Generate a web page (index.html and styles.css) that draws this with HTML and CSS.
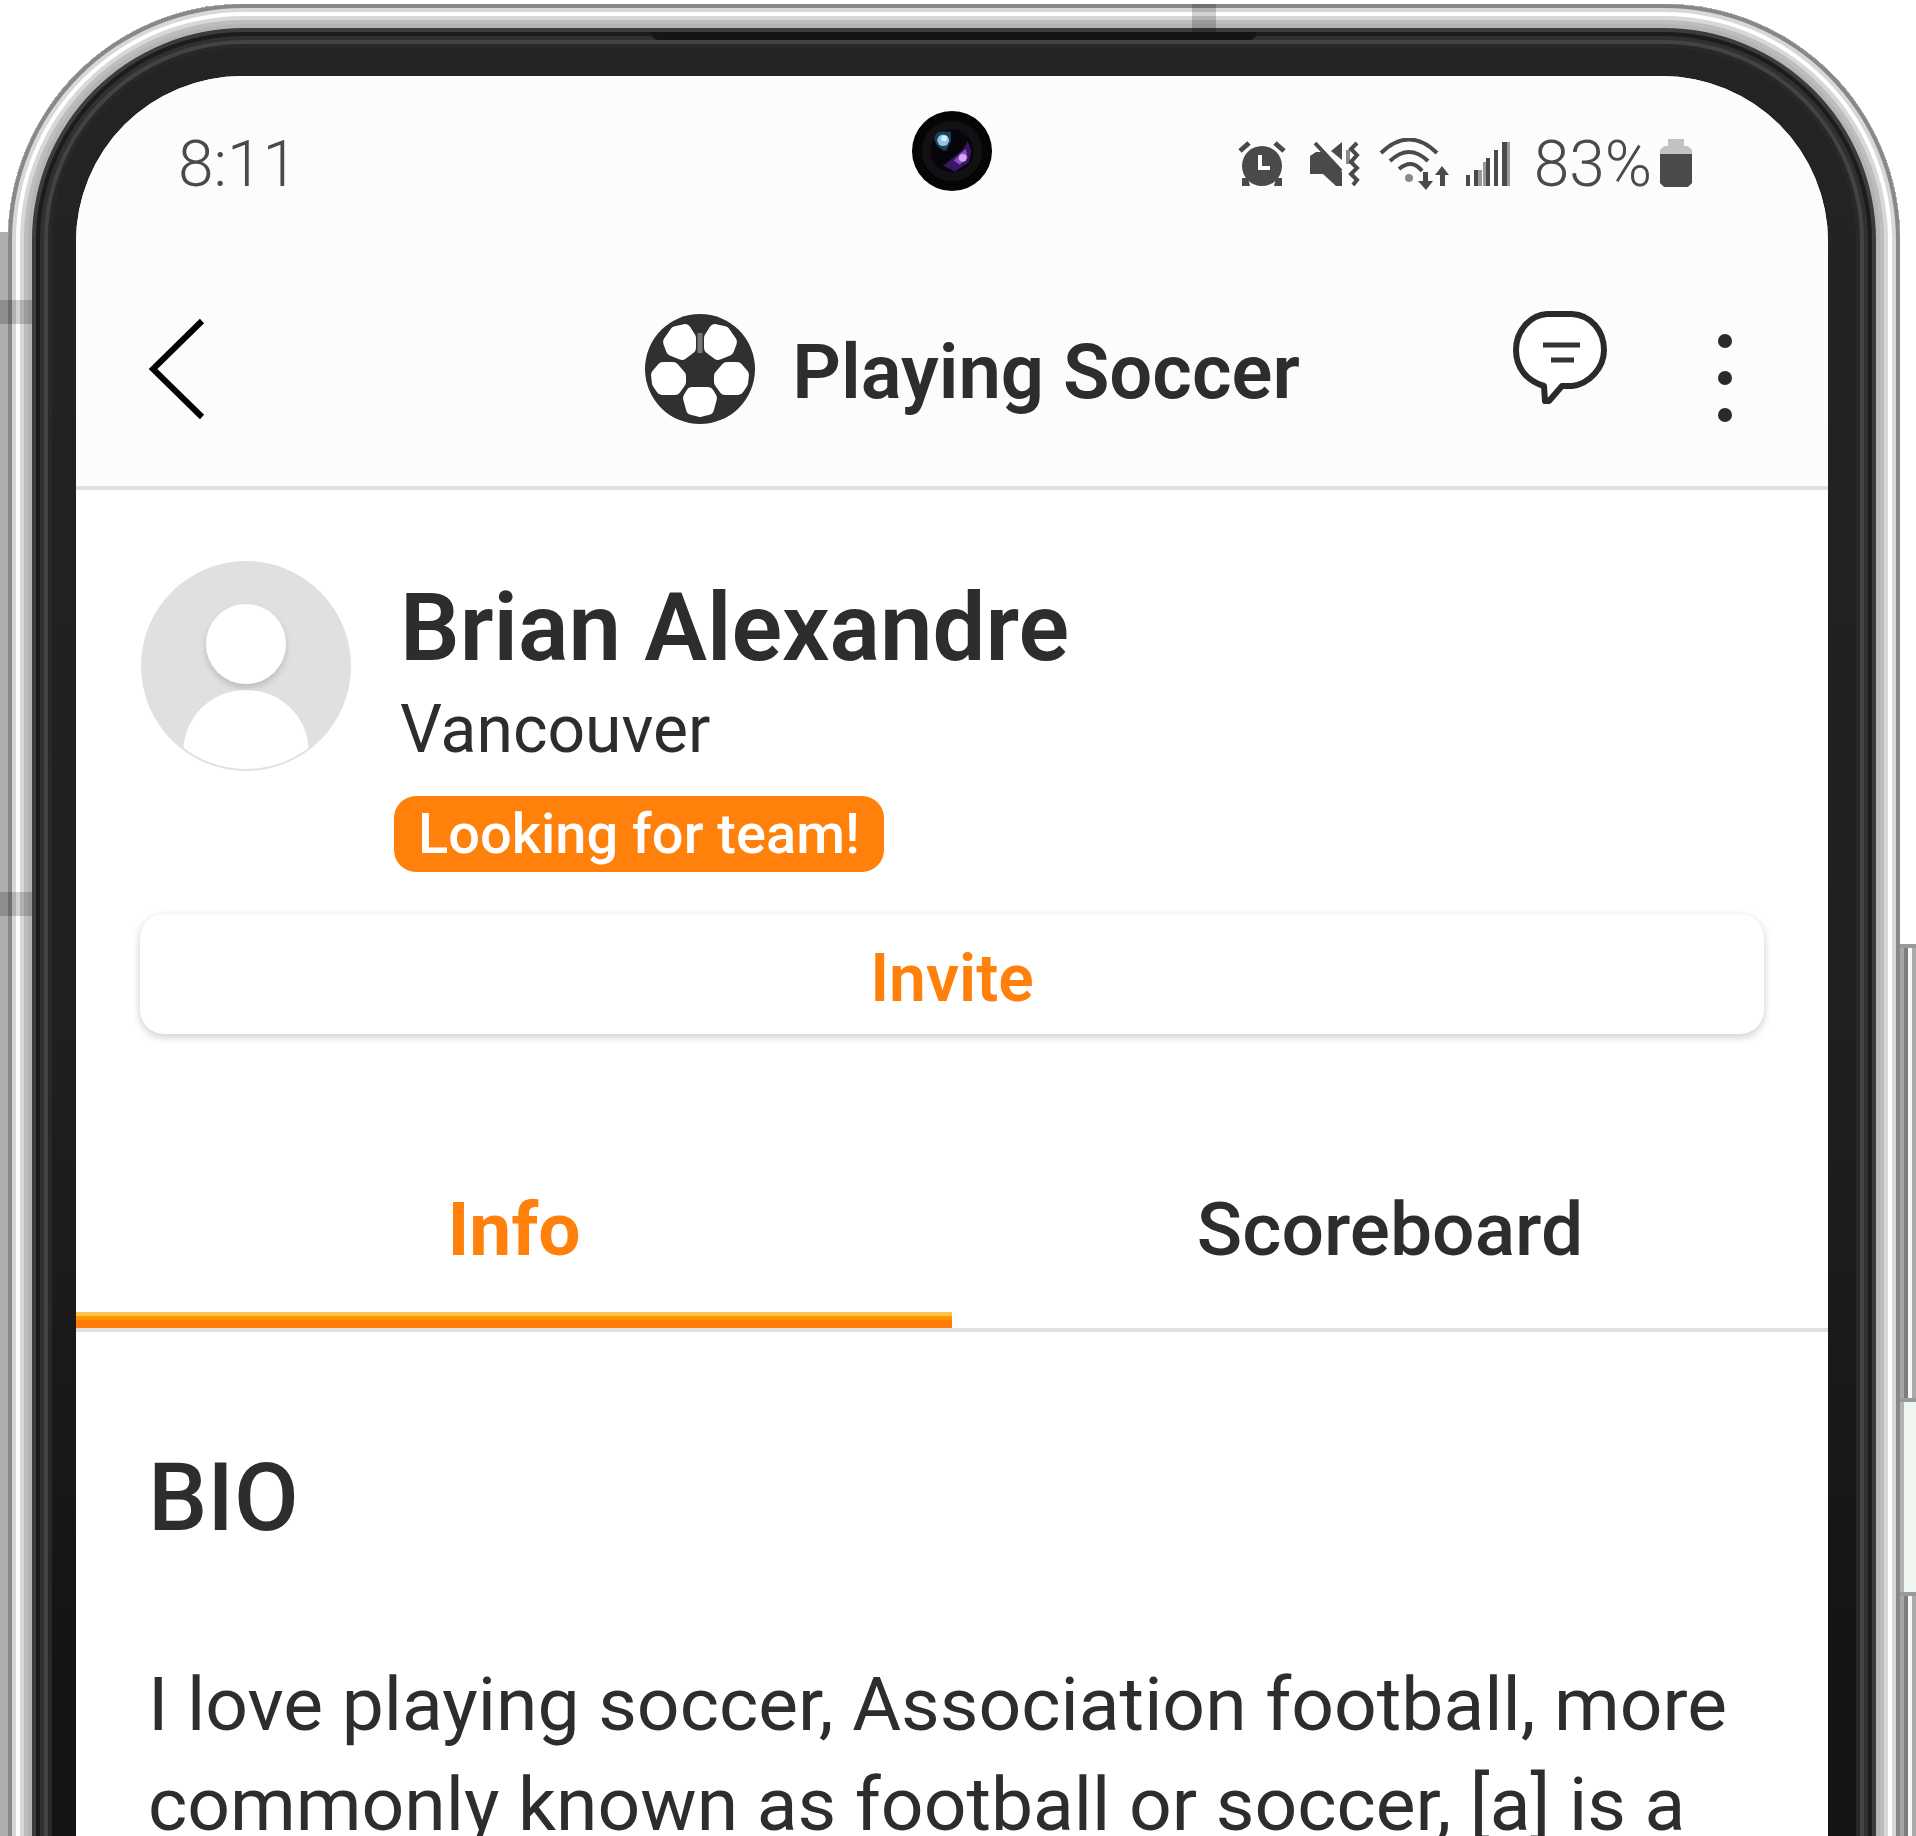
FILE: index.html
```html
<!DOCTYPE html>
<html lang="en">
<head>
<meta charset="utf-8">
<meta name="viewport" content="width=device-width, initial-scale=1">
<title>Playing Soccer</title>
<link rel="stylesheet" href="styles.css">
</head>
<body>
<div class="stage">
  <div class="side-left"></div>
  <div class="side-right"></div>
  <div class="side-key key-volume"></div>
  <div class="side-key key-power"></div>
  <div class="phone">
    <span class="antenna antenna-top"></span>
    <span class="antenna antenna-side antenna-upper"></span>
    <span class="antenna antenna-side antenna-lower"></span>
    <span class="speaker"></span>
    <div class="screen">
      <svg class="camera" viewBox="0 0 84 84" aria-hidden="true">
        <circle cx="42" cy="42" r="41" fill="#050506"/>
        <circle cx="42" cy="42" r="31" fill="#121012"/>
        <circle cx="42" cy="42" r="22" fill="#060509"/>
        <path d="M24 30q0-8 8-8h9v10l-5 10q-10-2-12-12z" fill="#173f5a"/>
        <circle cx="33" cy="31" r="6" fill="#8fc4e2"/>
        <circle cx="34" cy="29" r="3" fill="#d8f0f6"/>
        <path d="M58 32l4 10-3 12-14 9-12-6 10-8 10-8z" fill="#3a1766"/>
        <path d="M56 40l2 9-8 7-6-4 6-7z" fill="#8a4fc0"/>
        <circle cx="53" cy="49" r="4" fill="#d9a8f0"/>
      </svg>

      <div class="status">
        <span class="status-text">8:11</span>
        <div class="status-right">
          <svg width="52" height="52" viewBox="0 0 52 52" aria-hidden="true">
            <path d="M2 13L11 5M46 13L37 5" stroke="#4a4a4a" stroke-width="5" fill="none"/>
            <circle cx="24" cy="28" r="20" fill="#4a4a4a"/>
            <path d="M4 48V40H10L12 48zM44 48V40H38L36 48z" fill="#4a4a4a"/>
            <path d="M22 17v13h10" fill="none" stroke="#fff" stroke-width="4"/>
          </svg>
          <svg width="56" height="52" viewBox="0 0 56 52" aria-hidden="true">
            <path d="M4 18L10 14H18L36 34V48H30L17 36H4z" fill="#4a4a4a"/>
            <path d="M9 5l26 28" stroke="#4a4a4a" stroke-width="4"/>
            <path d="M36 4v18L25 13z" fill="#4a4a4a"/>
            <path d="M42 12v14" stroke="#8a8a8a" stroke-width="4"/>
            <path d="M51 5l-6 6 6 6-6 7 6 6-6 6 6 6-4 5" fill="none" stroke="#4a4a4a" stroke-width="4"/>
          </svg>
          <svg width="72" height="52" viewBox="0 0 72 52" aria-hidden="true">
            <g fill="none" stroke="#4a4a4a" stroke-width="4">
              <path d="M3 15Q31-12 59 15"/>
              <path d="M12 23q19-18 38 0"/>
              <path d="M21 31q13-11 23 2"/>
            </g>
            <circle cx="31" cy="40" r="4" fill="#8a8a8a"/>
            <path d="M45 34h5v9h5l-7 9-8-9h5zM62 48h5v-11h4l-7-9-7 9h5z" fill="#4a4a4a"/>
          </svg>
          <svg width="52" height="52" viewBox="0 0 52 52" aria-hidden="true">
            <path d="M0 37h4v11H0zM8 32h4v16H8zM20 20h4v28h-4zM28 12h4v36h-4zM36 4h5v44h-5z" fill="#4a4a4a"/>
            <path d="M12 32h4v16h-4zM17 24h3v24h-3zM41 4h3v44h-3z" fill="#999"/>
          </svg>
          <span class="battery">
            <span class="status-text">83%</span>
            <svg width="32" height="52" viewBox="0 0 32 52" aria-hidden="true">
              <path d="M8 1h16v7h4l4 4v4H0v-4l4-4h4z" fill="#c2c2c2"/>
              <path d="M0 16h32v29l-4 4H4l-4-4z" fill="#4a4a4a"/>
            </svg>
          </span>
        </div>
      </div>

      <header class="bar">
        <button class="icon-button back" type="button" aria-label="Back">
          <svg width="60" height="108" viewBox="0 0 60 108" aria-hidden="true"><path d="M56 6L7 54l49 48" fill="none" stroke="#000" stroke-width="6"/></svg>
        </button>
        <h1 class="title">
          <svg width="112" height="112" viewBox="-56 -56 112 112" aria-hidden="true">
            <circle r="55" fill="#303030"/>
            <g fill="#fff" stroke="#fff" stroke-width="12" stroke-linejoin="round">
              <path d="M-24-37L-15-39-10-31-10-21-18-15-28-19-31-27z"/>
              <path d="M24-37L15-39 10-31 10-21 18-15 28-19 31-27z"/>
              <path d="M-37-1L-27-1-20 7-20 13-25 20-38 20-42 14-43 6z"/>
              <path d="M37-1L27-1 20 7 20 13 25 20 38 20 42 14 43 6z"/>
              <path d="M-8 24L8 24 11 29 8 40 0 42-8 40-11 29z"/>
            </g>
            <path d="M0-36V-16" stroke="#777" stroke-width="5"/>
          </svg>
          <span class="title-text">Playing Soccer</span>
        </h1>
        <div class="actions">
          <button class="icon-button" type="button" aria-label="Messages">
            <svg width="98" height="120" viewBox="0 0 98 120" fill="none" aria-hidden="true">
              <path d="M35 5H60C79 6 92 22 92 41C92 59 77 75 60 77H50L37 92H33L32 77C15 72 4 59 4 41C4 22 18 6 35 5z" fill="#fff" stroke="#2a2a2a" stroke-width="6" stroke-linejoin="round"/>
              <path d="M31 36H68M39 51H62" stroke="#333" stroke-width="5"/>
            </svg>
          </button>
          <button class="icon-button" type="button" aria-label="More options">
            <svg width="18" height="120" viewBox="0 0 18 120" fill="#2a2a2a" aria-hidden="true"><circle cx="9" cy="32" r="7"/><circle cx="9" cy="69" r="7"/><circle cx="9" cy="106" r="7"/></svg>
          </button>
        </div>
      </header>

      <main>
        <section class="profile">
          <div class="person">
            <svg class="avatar" viewBox="0 0 212 212" aria-hidden="true">
              <defs>
                <clipPath id="face"><circle cx="106" cy="106" r="103"/></clipPath>
                <filter id="soft" x="-20%" y="-20%" width="140%" height="150%"><feDropShadow dx="0" dy="4" stdDeviation="3" flood-color="#000" flood-opacity="0.16"/></filter>
              </defs>
              <circle cx="106" cy="106" r="105" fill="#e0e0e0"/>
              <g clip-path="url(#face)"><path d="M43 194C43 158 70 130 106 130S169 158 169 194V212H43z" fill="#fff"/></g>
              <circle cx="106" cy="84" r="40" fill="#fff" filter="url(#soft)"/>
            </svg>
            <div class="details">
              <h2 class="name">Brian Alexandre</h2>
              <p class="city">Vancouver</p>
              <span class="tag">Looking for team!</span>
            </div>
          </div>
          <button class="invite" type="button">Invite</button>
        </section>

        <div class="tabs" role="tablist">
          <button class="tab tab-active" type="button" role="tab" aria-selected="true">Info</button>
          <button class="tab" type="button" role="tab" aria-selected="false">Scoreboard</button>
        </div>

        <section class="bio">
          <h2 class="bio-title">BIO</h2>
          <p class="bio-text">I love playing soccer, Association football, more commonly known as football or soccer, [a] is a</p>
        </section>
      </main>
    </div>
  </div>
</div>
</body>
</html>
```
FILE: styles.css
```css
:root {
  --ink: #2d2d2d;
  --orange: #ff800a;
  --line: #e0e0e2;
}

* { box-sizing: border-box; }

body {
  margin: 0;
  background: #fff;
  color: var(--ink);
  font-family: Roboto, "Liberation Sans", sans-serif;
}

h1, h2, p { margin: 0; }

button {
  padding: 0;
  border: 0;
  background: none;
  color: inherit;
  font: inherit;
}

svg { display: block; flex: none; }

.stage {
  position: relative;
  height: 100vh;
  padding: 4px 16px 0 8px;
  overflow: hidden;
}

/* Device body: metal rim, then black bezel */
.phone {
  position: relative;
  min-height: calc(100vh + 240px);
  padding: 72px 72px 0 68px;
  border-radius: 236px;
  background: linear-gradient(#242426, #1f1f21 50%, #141414 80%);
  box-shadow:
    inset 0 0 0 4px #888,
    inset 0 0 0 8px #d8d8d8,
    inset 0 0 0 12px #fff,
    inset 0 0 0 16px #d8d8d8,
    inset 0 0 0 20px #bdbdbd,
    inset 0 0 0 24px #b4b4b6,
    inset 0 0 0 28px #3c3c3e,
    inset 0 0 0 32px #1c1c1e,
    inset 0 0 0 36px #2e3031,
    inset 0 0 0 40px #414345,
    inset 0 0 0 44px #26282a;
}

.side-left,
.side-right,
.side-key {
  position: absolute;
  bottom: 0;
}

.side-left {
  top: 232px;
  left: 0;
  width: 12px;
  background: linear-gradient(90deg, #abaeaa 66%, #8e8e8e 66%);
}

.side-right {
  top: 1400px;
  right: 0;
  width: 16px;
  background: #eef6ef;
  border-left: 4px solid #b0b4b0;
}

.side-key {
  right: 0;
  width: 16px;
  border-top: 4px solid #999;
  background: linear-gradient(90deg, #a5a5a5 4px, #7c7c7c 4px 8px, #f6f6f6 8px 12px, #aaa 12px);
}

.key-volume { top: 944px; height: 458px; bottom: auto; border-bottom: 4px solid #999; }
.key-power { top: 1592px; }

.antenna { position: absolute; background: rgb(0 0 0 / 18%); }
.antenna-top { top: 0; left: 1184px; width: 24px; height: 28px; }
.antenna-side { left: -8px; width: 32px; height: 24px; }
.antenna-upper { top: 296px; }
.antenna-lower { top: 888px; }

.speaker {
  position: absolute;
  top: 28px;
  left: 34%;
  width: 32%;
  height: 8px;
  border-radius: 0 0 8px 8px;
  background: #151516;
}

.screen {
  position: relative;
  min-height: 100vh;
  border-radius: 166px 166px 0 0;
  background: #fff;
  overflow: hidden;
}

.camera {
  position: absolute;
  top: 34px;
  left: 50%;
  width: 82px;
  margin-left: -41px;
}

.status {
  display: flex;
  align-items: center;
  justify-content: space-between;
  height: 176px;
  padding: 0 136px 0 102px;
  background: #fcfcfc;
}

.status-right { display: flex; align-items: center; gap: 16px; }
.battery { display: flex; align-items: center; gap: 8px; }
.status-text { color: #4a4a4a; font-size: 64px; font-weight: 300; }

.bar {
  display: grid;
  grid-template-columns: 1fr auto 1fr;
  align-items: center;
  height: 238px;
  padding: 0 94px 0 70px;
  border-bottom: 4px solid var(--line);
  background: #fcfcfc;
}

.back { justify-self: start; }

.title {
  display: flex;
  align-items: center;
  gap: 36px;
  margin-left: 64px;
  font-size: 76px;
  font-weight: 600;
}

.title-text { padding-top: 6px; }

.actions {
  display: flex;
  justify-content: flex-end;
  gap: 106px;
}

.profile { padding: 70px 64px 0; }
.person { display: flex; align-items: flex-start; gap: 42px; }
.avatar { width: 212px; height: 212px; }

.details {
  display: flex;
  flex-direction: column;
  align-items: flex-start;
  padding-top: 20px;
}

.name,
.city { padding-left: 6px; }

.name { font-size: 94px; font-weight: 600; line-height: 96px; }
.city { margin-top: 14px; font-size: 66px; line-height: 80px; }

.tag {
  margin-top: 26px;
  padding: 0 24px;
  border-radius: 22px;
  background: var(--orange);
  color: #fff;
  font-size: 56px;
  font-weight: 500;
  line-height: 76px;
}

.invite {
  width: 100%;
  height: 120px;
  margin-top: 42px;
  padding-top: 8px;
  border-radius: 24px;
  background: #fff;
  box-shadow: 0 3px 9px rgb(0 0 0 / 20%);
  color: var(--orange);
  font-size: 66px;
  font-weight: 600;
}

.tabs {
  display: grid;
  grid-template-columns: 1fr 1fr;
  margin-top: 112px;
  border-bottom: 4px solid var(--line);
}

.tab {
  height: 182px;
  border-bottom: 16px solid transparent;
  font-size: 75px;
  font-weight: 500;
}

.tab-active {
  background: linear-gradient(#ffc34d 4px, #ff9500 4px 8px, #ff7a08 8px) left bottom / 100% 16px no-repeat border-box;
  color: var(--orange);
  font-weight: 700;
}

.bio { padding: 118px 60px 0 72px; }
.bio-title { font-size: 94px; font-weight: 500; line-height: 96px; }
.bio-text { margin-top: 108px; font-size: 75px; line-height: 100px; }
```
